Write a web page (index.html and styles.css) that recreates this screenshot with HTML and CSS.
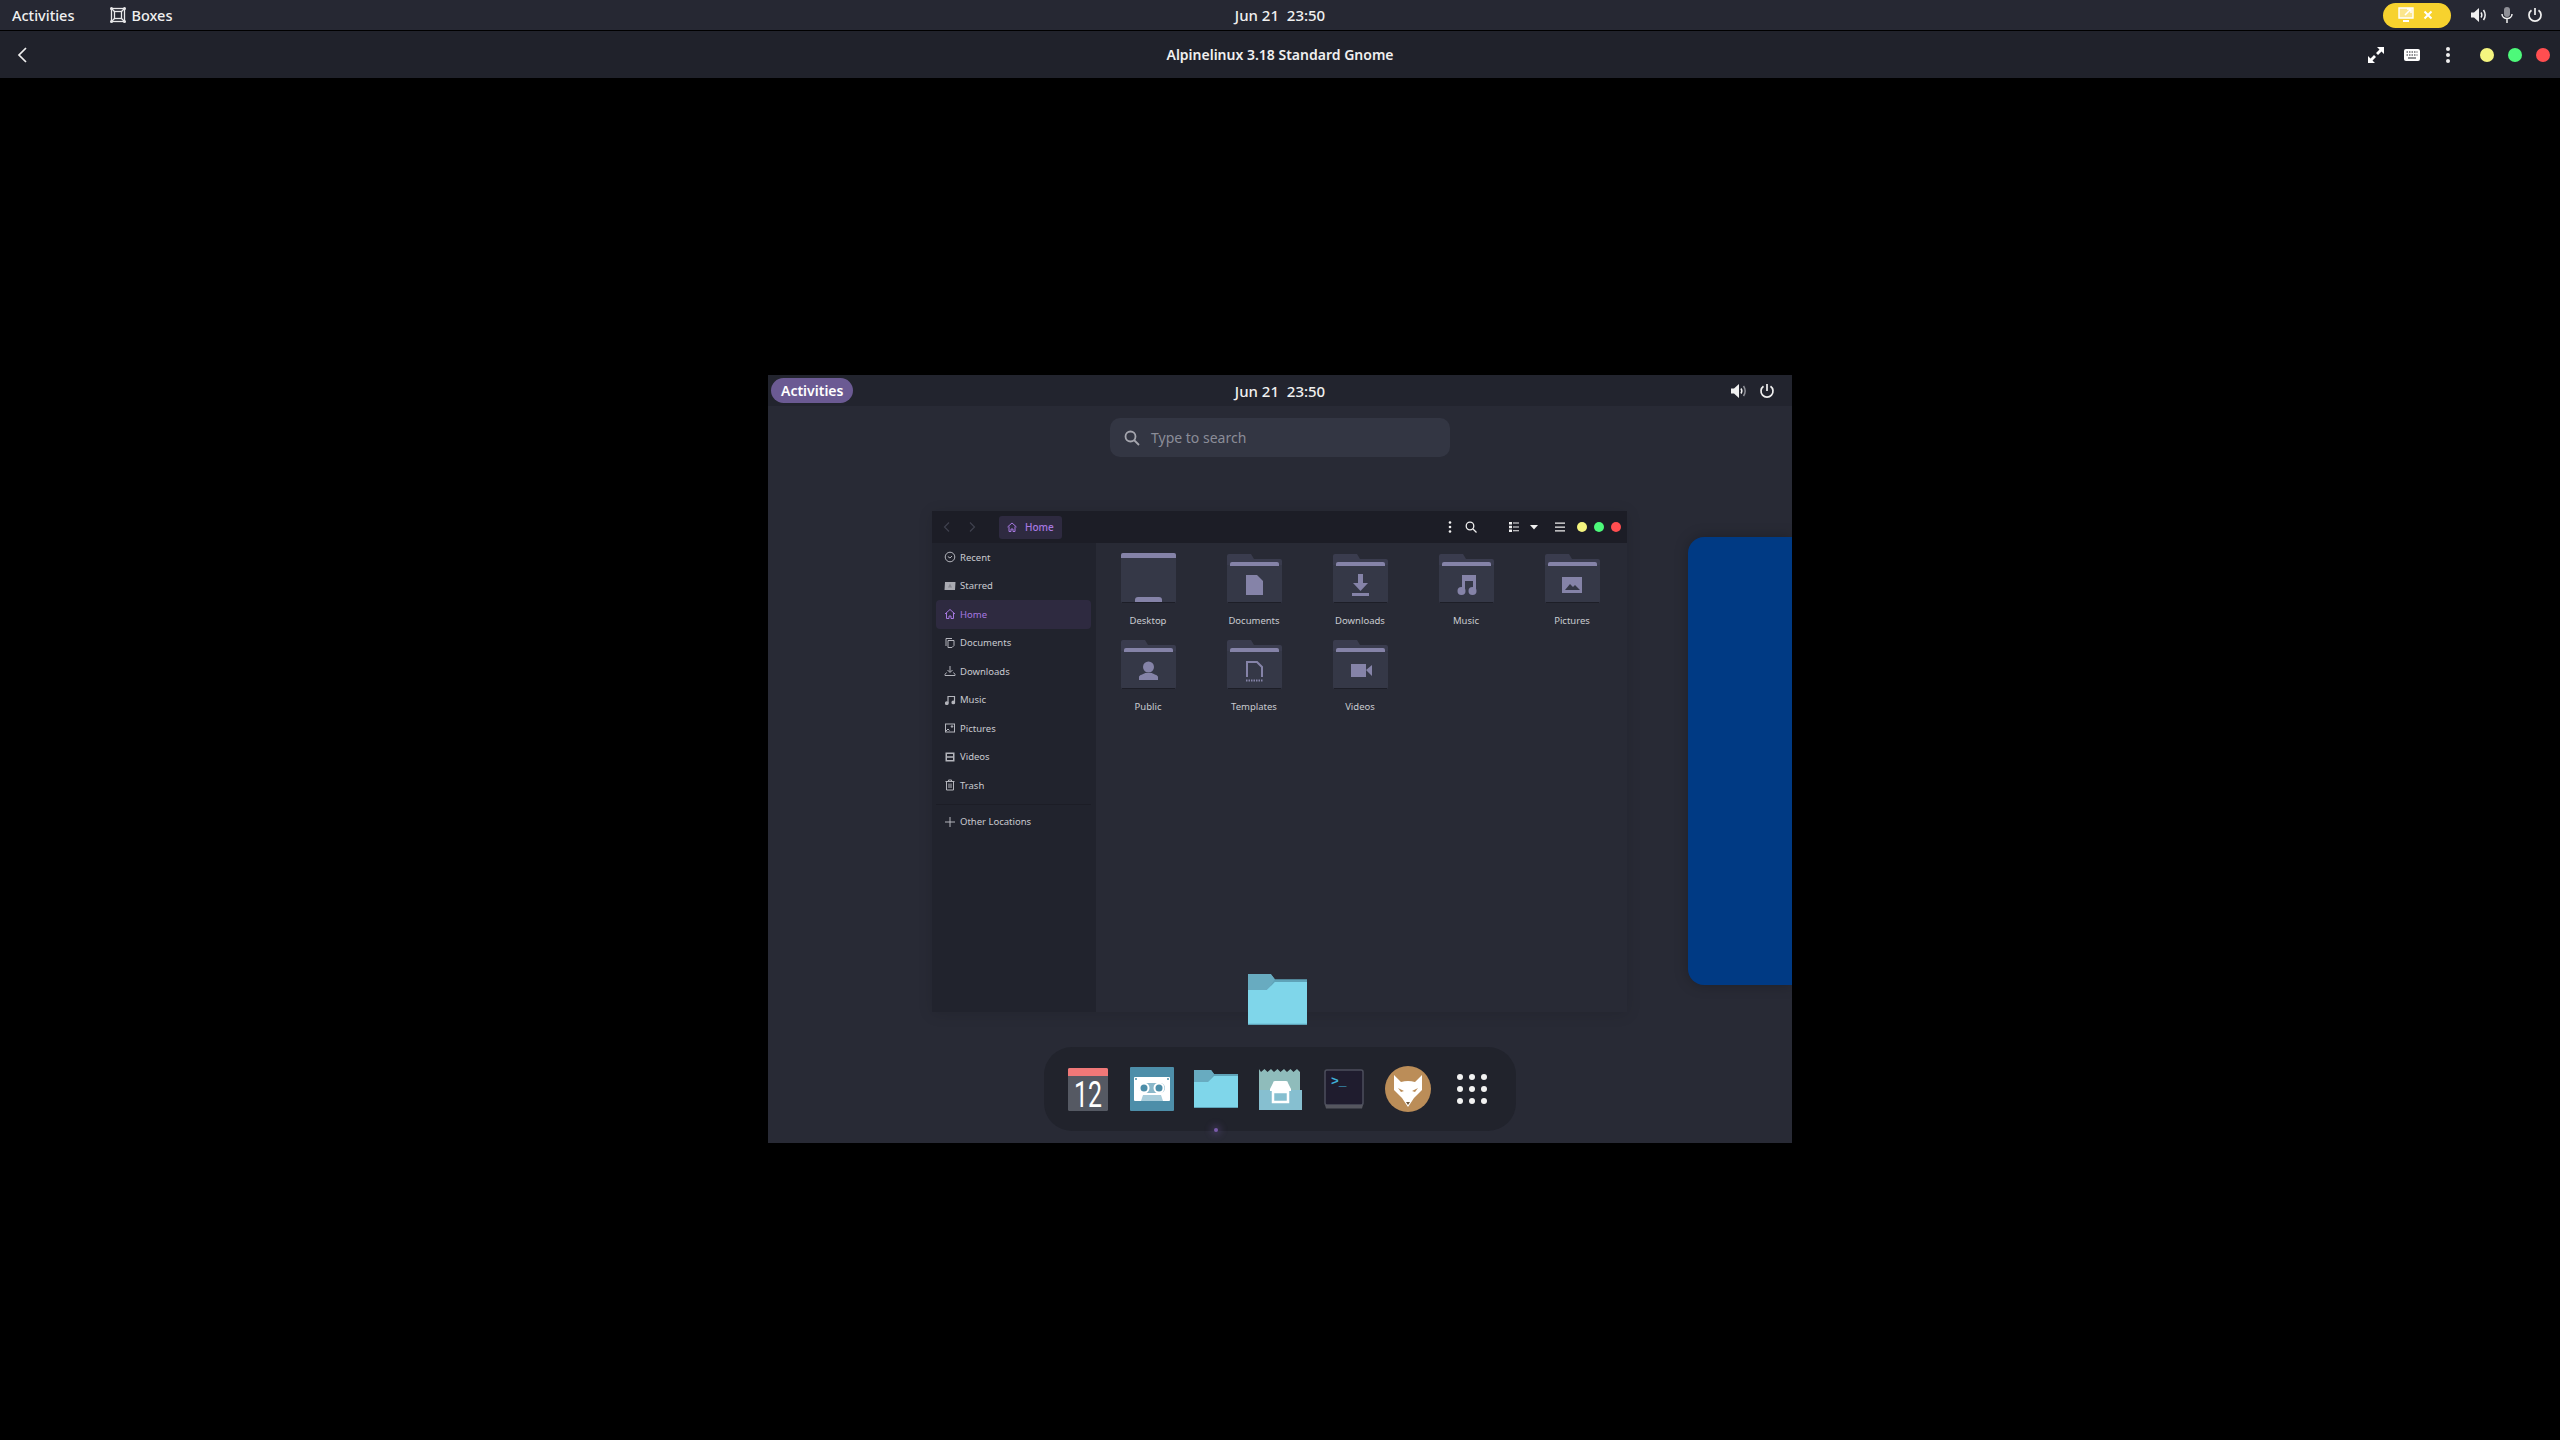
FILE: index.html
```html
<!DOCTYPE html>
<html lang="en">
<head>
    <meta charset="UTF-8" />
    <title>Alpinelinux 3.18 Standard Gnome | Boxes</title>
    <link rel="stylesheet" href="styles.css">
</head>
<body>

<svg class="defs" width="0" height="0">
    <defs>
        <symbol id="folder-dark" viewBox="0 0 55 50">
            <path d="M2 1h22l3 5h26a2 2 0 0 1 2 2v8H0V3a2 2 0 0 1 2-2z" fill="#3a3c4e"/>
            <path d="M0 12h55v36a2 2 0 0 1-2 2H2a2 2 0 0 1-2-2z" fill="#353847"/>
            <path d="M3 11a2 2 0 0 1 2-2h45a2 2 0 0 1 2 2v2H3z" fill="#8583a8"/>
            <rect x="1" y="49" width="53" height="1" fill="#1d1e27"/>
        </symbol>
        <symbol id="folder-blue" viewBox="0 0 44 38">
            <path d="M0 0h17l3 4h24v34H0z" fill="#5fa3b8"/>
            <path d="M0 0h17l3 4-6 9H0z" fill="#68abc0"/>
            <path d="M0 12h14l6-6h24v31H0z" fill="#7fd6ea"/>
        </symbol>
    </defs>
</svg>

<!-- barra de arriba -->
<header class="topbar">
    <div class="topbar-left">
        <span>Activities</span>
        <span class="app-menu">
            <svg class="ico16" viewBox="0 0 16 16" fill="none" stroke="#e8e8ea" stroke-width="1.3">
                <rect x="1.5" y="1.5" width="13" height="13"/>
                <rect x="4.5" y="4.5" width="7" height="7"/>
                <path d="M1.5 1.5l3 3M14.5 1.5l-3 3M1.5 14.5l3-3M14.5 14.5l-3-3"/>
                <g fill="#e8e8ea" stroke="none">
                    <circle cx="1.5" cy="1.5" r="1.5"/><circle cx="14.5" cy="1.5" r="1.5"/>
                    <circle cx="1.5" cy="14.5" r="1.5"/><circle cx="14.5" cy="14.5" r="1.5"/>
                </g>
            </svg>
            Boxes
        </span>
    </div>
    <div class="clock">Jun 21&nbsp; 23:50</div>
    <div class="topbar-right">
        <span class="share-pill">
            <svg class="ico16" viewBox="0 0 16 16">
                <path d="M1 1h14v10H1z" fill="#fbe68c" stroke="#fff" stroke-width="1.4"/>
                <path d="M5 14h6" stroke="#fff" stroke-width="2"/>
                <path d="M7 8l6-6M9 2h4v4" fill="none" stroke="#fff" stroke-width="1.5"/>
            </svg>
            <svg class="ico10" viewBox="0 0 10 10"><path d="M1.5 1.5l7 7M8.5 1.5l-7 7" stroke="#fff" stroke-width="2"/></svg>
        </span>
        <svg class="ico16" viewBox="0 0 16 16" fill="none" stroke="#f0f0f0">
            <path d="M0 5.5h3L8 1v14l-5-4.500H0z" fill="#f0f0f0" stroke="none"/>
            <path d="M10 5.500c1 1.500 1 3.500 0 5M12.500 3c2 3 2 7 0 10" stroke-width="1.500"/>
        </svg>
        <svg class="ico16" viewBox="0 0 16 16" fill="none" stroke="#f0f0f0" stroke-width="1.500">
            <rect x="5" y="0" width="6" height="10" rx="3" fill="#8f9097" stroke="none"/>
            <path d="M3 7c0 6 10 6 10 0M8 12v4"/>
        </svg>
        <svg class="ico16" viewBox="0 0 16 16" fill="none" stroke="#f0f0f0" stroke-width="1.700">
            <path d="M8 1v7M4.500 3.200a6 6 0 1 0 7 0"/>
        </svg>
    </div>
</header>

<div class="headerbar">
    <div>
        <svg class="ico16 back" viewBox="0 0 16 16" fill="none" stroke="#f0f0f0" stroke-width="1.700"><path d="M11 1L4 8l7 7"/></svg>
    </div>
    <div class="title">Alpinelinux 3.18 Standard Gnome</div>
    <div class="headerbar-right">
        <svg class="ico16" viewBox="0 0 16 16" fill="#fff">
            <path d="M9 0h7v7l-2.500-2.500L10 8 8 6l3.500-3.500zM7 16H0V9l2.500 2.500L6 8l2 2-3.500 3.500z"/>
        </svg>
        <svg class="ico16" viewBox="0 0 16 16">
            <rect y="2" width="16" height="12" rx="2" fill="#fff"/>
            <path d="M2.500 5h11M2.500 8h11" stroke="#20222b" stroke-dasharray="1.500 1"/>
            <path d="M4 11h8" stroke="#20222b"/>
        </svg>
        <svg class="ico16" viewBox="0 0 16 16" fill="#f0f0f0">
            <circle cx="8" cy="2" r="2"/><circle cx="8" cy="8" r="2"/><circle cx="8" cy="14" r="2"/>
        </svg>
        <div class="win-dots">
            <span class="dot yellow"></span>
            <span class="dot green"></span>
            <span class="dot red"></span>
        </div>
    </div>
</div>

<main class="viewer">
    <!-- pantalla de la maquina virtual -->
    <div class="vm">
        <div class="vm-panel">
            <div><span class="activities-pill">Activities</span></div>
            <div class="clock">Jun 21&nbsp; 23:50</div>
            <div class="vm-panel-right">
                <svg class="ico16" viewBox="0 0 16 16" fill="none" stroke="#8f9097">
                    <path d="M0 5.500h3L8 1v14l-5-4.500H0z" fill="#f0f0f0" stroke="none"/>
                    <path d="M10 5.500c1 1.500 1 3.500 0 5" stroke="#f0f0f0" stroke-width="1.500"/>
                    <path d="M12.500 3c2 3 2 7 0 10" stroke-width="1.500"/>
                </svg>
                <svg class="ico16" viewBox="0 0 16 16" fill="none" stroke="#f0f0f0" stroke-width="1.700">
                    <path d="M8 1v7M4.500 3.200a6 6 0 1 0 7 0"/>
                </svg>
            </div>
        </div>

        <div class="search">
            <svg class="ico16" viewBox="0 0 16 16" fill="none" stroke="#a5a6ae" stroke-width="1.800">
                <circle cx="6.500" cy="6.500" r="5"/><path d="M10 10l5 5"/>
            </svg>
            <span>Type to search</span>
        </div>

        <!-- ventana de archivos -->
        <div class="files-window">
            <div class="files-header">
                <svg class="ico10 nav-arrow" viewBox="0 0 10 10" fill="none" stroke="#3f414e" stroke-width="1.200"><path d="M7 .5L2.500 5 7 9.500"/></svg>
                <svg class="ico10 nav-arrow" viewBox="0 0 10 10" fill="none" stroke="#3f414e" stroke-width="1.200"><path d="M3 .5L7.500 5 3 9.500"/></svg>
                <div class="path-btn">
                    <svg class="ico10" viewBox="0 0 10 10" fill="none" stroke="#a678e0"><path d="M.5 5L5 1l4.500 4M2 4.500V9.500h2V7h2v2.500h2v-5"/></svg>
                    <span>Home</span>
                </div>
                <div class="files-tools">
                    <svg class="ico12" viewBox="0 0 12 12" fill="#f0f0f0"><circle cx="6" cy="1.500" r="1.300"/><circle cx="6" cy="6" r="1.300"/><circle cx="6" cy="10.500" r="1.300"/></svg>
                    <svg class="ico12 tool-search" viewBox="0 0 12 12" fill="none" stroke="#f0f0f0" stroke-width="1.300"><circle cx="5" cy="5" r="3.800"/><path d="M8 8l3.500 3.500"/></svg>
                    <svg class="ico12 tool-view" viewBox="0 0 12 12" fill="#f0f0f0"><path d="M1 1h3v2.500H1zM1 4.800h3v2.500H1zM1 8.500h3V11H1zM5 1.500h6v1H5zM5 5.500h6v1H5zM5 9.300h6v1H5z"/></svg>
                    <svg class="ico10" viewBox="0 0 10 10" fill="#f0f0f0"><path d="M1 3h8L5 7.500z"/></svg>
                    <svg class="ico12 tool-menu" viewBox="0 0 12 12" fill="#f0f0f0"><path d="M1 1.500h10v1.300H1zM1 5.400h10v1.300H1zM1 9.300h10v1.300H1z"/></svg>
                    <span class="dot small yellow first"></span>
                    <span class="dot small green"></span>
                    <span class="dot small red"></span>
                </div>
            </div>

            <div class="files-body">
                <aside class="sidebar">
                    <div class="side-row">
                        <svg class="ico12" viewBox="0 0 12 12" fill="none" stroke="#b4b5bc"><circle cx="6" cy="6" r="4.800"/><path d="M3.800 5.500L6 7l2-2"/></svg>
                        <span>Recent</span>
                    </div>
                    <div class="side-row">
                        <svg class="ico12" viewBox="0 0 12 12"><path d="M1 2h10.500l-.5 8H.5z" fill="#a9aab1"/><path d="M6 3.500l2 4H4z" fill="#85868e"/></svg>
                        <span>Starred</span>
                    </div>
                    <div class="side-row active">
                        <svg class="ico12" viewBox="0 0 12 12" fill="none" stroke="#a678e0"><path d="M1 6l5-4.500L11 6M2.500 5v5.500h2.500V8h2v2.500h2.500V5"/></svg>
                        <span>Home</span>
                    </div>
                    <div class="side-row">
                        <svg class="ico12" viewBox="0 0 12 12" fill="none" stroke="#b4b5bc"><path d="M2 9V1.500h6M4 3.500h6v5l-2 2H4z"/></svg>
                        <span>Documents</span>
                    </div>
                    <div class="side-row">
                        <svg class="ico12" viewBox="0 0 12 12" fill="none" stroke="#b4b5bc"><path d="M6 1v6M3.500 5L6 7.500 8.500 5M2.500 7.500L1 9.500v1h10v-1L9.500 7.500"/></svg>
                        <span>Downloads</span>
                    </div>
                    <div class="side-row">
                        <svg class="ico12" viewBox="0 0 12 12" fill="none" stroke="#b4b5bc" stroke-width="1.200"><path d="M4 9V2.500h6.500V8"/><circle cx="2.800" cy="9.200" r="1.300" fill="#b4b5bc"/><circle cx="9.300" cy="8.400" r="1.300" fill="#b4b5bc"/></svg>
                        <span>Music</span>
                    </div>
                    <div class="side-row">
                        <svg class="ico12" viewBox="0 0 12 12" fill="none" stroke="#b4b5bc"><rect x="1.500" y="2" width="9" height="8"/><path d="M2 9l2-2 1.500 1.500" /><circle cx="8" cy="4.500" r=".8" fill="#b4b5bc"/></svg>
                        <span>Pictures</span>
                    </div>
                    <div class="side-row">
                        <svg class="ico12" viewBox="0 0 12 12" fill="#b4b5bc"><path d="M1.500 1.500h9v9h-9zM3 3v2.200h6V3zM3 6.800V9h6V6.800z" fill-rule="evenodd"/></svg>
                        <span>Videos</span>
                    </div>
                    <div class="side-row">
                        <svg class="ico12" viewBox="0 0 12 12" fill="none" stroke="#b4b5bc"><path d="M1.500 2.500h9M4.500 2.500V1h3v1.500M2.500 2.500v8.500h7V2.500M5 4.500V9M7 4.500V9"/></svg>
                        <span>Trash</span>
                    </div>
                    <div class="side-sep"></div>
                    <div class="side-row">
                        <svg class="ico12" viewBox="0 0 12 12" fill="none" stroke="#b4b5bc"><path d="M6 1v10M1 6h10"/></svg>
                        <span>Other Locations</span>
                    </div>
                </aside>

                <section class="file-grid">
                    <div class="file-item">
                        <svg class="folder" viewBox="0 0 55 50">
                            <path d="M2 0h51a2 2 0 0 1 2 2v46a2 2 0 0 1-2 2H2a2 2 0 0 1-2-2V2a2 2 0 0 1 2-2z" fill="#353847"/>
                            <path d="M2 0h51a2 2 0 0 1 2 2v3H0V2a2 2 0 0 1 2-2z" fill="#8583a8"/>
                            <path d="M14 49v-2a3 3 0 0 1 3-3h21a3 3 0 0 1 3 3v2z" fill="#8583a8"/>
                            <rect x="1" y="49" width="53" height="1" fill="#1d1e27"/>
                        </svg>
                        <span>Desktop</span>
                    </div>
                    <div class="file-item">
                        <svg class="folder" viewBox="0 0 55 50">
                            <use href="#folder-dark"/>
                            <path d="M19 22h11l6 6v14H19z" fill="#8583a8"/>
                        </svg>
                        <span>Documents</span>
                    </div>
                    <div class="file-item">
                        <svg class="folder" viewBox="0 0 55 50">
                            <use href="#folder-dark"/>
                            <path d="M25 21h5v9h5l-7.500 8L20 30h5zM19 40h17v3H19z" fill="#8583a8"/>
                        </svg>
                        <span>Downloads</span>
                    </div>
                    <div class="file-item">
                        <svg class="folder" viewBox="0 0 55 50">
                            <use href="#folder-dark"/>
                            <path d="M23 37V22h14v17h-3V28h-8v9z" fill="#8583a8"/>
                            <circle cx="22.500" cy="38" r="4" fill="#8583a8"/>
                            <circle cx="33.500" cy="38" r="4" fill="#8583a8"/>
                        </svg>
                        <span>Music</span>
                    </div>
                    <div class="file-item">
                        <svg class="folder" viewBox="0 0 55 50">
                            <use href="#folder-dark"/>
                            <path d="M17 24h20v16H17z" fill="#8583a8"/>
                            <path d="M20 37l5-6 3 3 2-2 5 5z" fill="#353847"/>
                        </svg>
                        <span>Pictures</span>
                    </div>
                    <div class="file-item">
                        <svg class="folder" viewBox="0 0 55 50">
                            <use href="#folder-dark"/>
                            <circle cx="27.500" cy="28" r="5.500" fill="#8583a8"/>
                            <path d="M18 41v-3c0-2 5-3 6-4h7c1 1 6 2 6 4v3z" fill="#8583a8"/>
                        </svg>
                        <span>Public</span>
                    </div>
                    <div class="file-item">
                        <svg class="folder" viewBox="0 0 55 50">
                            <use href="#folder-dark"/>
                            <path d="M20 38V23h10l5 5v10" fill="none" stroke="#8583a8" stroke-width="2"/>
                            <path d="M19 41.500h17" stroke="#8583a8" stroke-width="2" stroke-dasharray="1.500 1"/>
                        </svg>
                        <span>Templates</span>
                    </div>
                    <div class="file-item">
                        <svg class="folder" viewBox="0 0 55 50">
                            <use href="#folder-dark"/>
                            <path d="M18 25h15v13H18zM33 31l6-5v11z" fill="#8583a8"/>
                        </svg>
                        <span>Videos</span>
                    </div>
                </section>
            </div>
        </div>

        <div class="other-window"></div>

        <svg class="drag-folder" viewBox="0 0 44 38" preserveAspectRatio="none"><use href="#folder-blue"/></svg>

        <!-- dock -->
        <nav class="dock">
            <div class="dock-slot">
                <svg class="app-cal" viewBox="0 0 40 43">
                    <rect width="40" height="43" rx="1.500" fill="#555963"/>
                    <path d="M1.500 0h37A1.500 1.500 0 0 1 40 1.500V8H0V1.500A1.500 1.500 0 0 1 1.500 0z" fill="#f07878"/>
                    <text x="6" y="39" class="cal-day" textLength="28" lengthAdjust="spacingAndGlyphs">12</text>
                </svg>
            </div>
            <div class="dock-slot">
                <svg class="app-44" viewBox="0 0 44 44">
                    <rect width="44" height="44" rx="1" fill="#4d8ea9"/>
                    <rect x="4" y="10" width="36" height="24" rx="1" fill="#fff"/>
                    <rect x="9" y="16" width="26" height="10" rx="5" fill="#8ab8ca"/>
                    <circle cx="14" cy="21" r="5.500" fill="#fff"/>
                    <circle cx="29" cy="21" r="5.500" fill="#fff"/>
                    <circle cx="14" cy="21" r="3.500" fill="#4d8ea9"/>
                    <circle cx="29" cy="21" r="3.500" fill="#4d8ea9"/>
                    <path d="M11 34l2-6h18l2 6z" fill="#a8cddb"/>
                    <circle cx="6" cy="12" r="1" fill="#4d8ea9"/>
                    <circle cx="38" cy="12" r="1" fill="#4d8ea9"/>
                </svg>
            </div>
            <div class="dock-slot">
                <svg class="app-folder" viewBox="0 0 44 38" preserveAspectRatio="none"><use href="#folder-blue"/></svg>
            </div>
            <div class="dock-slot">
                <svg class="app-store" viewBox="0 0 43 42">
                    <path d="M0 1l2 3 3.500-3 3 3 3.500-3 3 3 3.500-3 3 3 3.500-3 3 3 3.500-3 3 3 3.500-3 3 3V22H0z" fill="#8fbcbb"/>
                    <rect y="22" width="43" height="20" fill="#86bfd0"/>
                    <path d="M14 15a2 2 0 0 1 2-2h11a2 2 0 0 1 2 2l3 6v2H11v-2z" fill="#fff"/>
                    <path d="M14 24h15v10H14z" fill="none" stroke="#fff" stroke-width="2.500"/>
                </svg>
            </div>
            <div class="dock-slot">
                <svg class="app-term" viewBox="0 0 40 40">
                    <rect x="1" y="1" width="38" height="35" rx="2" fill="#1f1c2e" stroke="#4c4e5c" stroke-width="1.500"/>
                    <path d="M1 36h38l-1 3.500H2z" fill="#55565f"/>
                    <text x="7" y="16" class="term-prompt">&gt;_</text>
                </svg>
            </div>
            <div class="dock-slot">
                <svg class="app-fox" viewBox="0 0 46 46">
                    <circle cx="23" cy="23" r="23" fill="#bb8d58"/>
                    <path d="M9 9l7 7q7-2 14 0l7-7v15l-8 8-6 9-6-9-8-8z" fill="#fff"/>
                    <path d="M13 22l6 3-3 1zM33 22l-6 3 3 1z" fill="#bb8d58"/>
                    <path d="M21 36h4l-2 3z" fill="#6b5338"/>
                </svg>
            </div>
            <div class="dock-slot">
                <svg class="app-grid" viewBox="0 0 30 30" fill="#f2f2f2">
                    <circle cx="3" cy="3" r="3"/><circle cx="15" cy="3" r="3"/><circle cx="27" cy="3" r="3"/>
                    <circle cx="3" cy="15" r="3"/><circle cx="15" cy="15" r="3"/><circle cx="27" cy="15" r="3"/>
                    <circle cx="3" cy="27" r="3"/><circle cx="15" cy="27" r="3"/><circle cx="27" cy="27" r="3"/>
                </svg>
            </div>
            <span class="running-dot"></span>
        </nav>
    </div>
</main>

</body>
</html>
```

FILE: styles.css
```css
html, body {
    margin: 0;
    height: 100%;
    overflow: hidden;
    background-color: #000;
}

body {
    display: flex;
    flex-direction: column;
    font-family: "Noto Sans", sans-serif;
    color: #f0f0f0;
}

svg {
    display: block;
    flex: none;
}

.defs {
    position: absolute;
}

.ico16 {
    width: 16px;
    height: 16px;
}

.ico12 {
    width: 12px;
    height: 12px;
}

.ico10 {
    width: 10px;
    height: 10px;
}

/* barra de arriba */
.topbar {
    display: grid;
    grid-template-columns: 1fr auto 1fr;
    align-items: center;
    height: 30px;
    border-bottom: 1px solid #000;
    background-color: #262833;
    font-size: 15px;
    font-weight: 500;
}

.topbar-left {
    display: flex;
    align-items: center;
    gap: 36px;
    padding-left: 12px;
    font-size: 14.5px;
}

.app-menu {
    display: flex;
    align-items: center;
    gap: 5px;
}

.topbar-right {
    display: flex;
    justify-content: flex-end;
    align-items: center;
    gap: 12px;
    padding-right: 17px;
}

.share-pill {
    display: flex;
    align-items: center;
    gap: 9px;
    height: 25px;
    width: 68px;
    box-sizing: border-box;
    margin-right: 8px;
    padding-left: 15px;
    border-radius: 13px;
    background-color: #f7d22e;
}

.headerbar {
    display: grid;
    grid-template-columns: 1fr auto 1fr;
    align-items: center;
    height: 47px;
    background-color: #20222b;
}

.back {
    margin-left: 15px;
}

.title {
    font-size: 14px;
    font-weight: 600;
}

.headerbar-right {
    display: flex;
    justify-content: flex-end;
    align-items: center;
    gap: 20px;
    padding-right: 10px;
}

.win-dots {
    display: flex;
    gap: 14px;
    margin-left: 4px;
}

.dot {
    display: block;
    width: 14px;
    height: 14px;
    border-radius: 50%;
}

.dot.small {
    width: 10px;
    height: 10px;
}

.yellow {
    background-color: #f5f57f;
}

.green {
    background-color: #4df97a;
}

.red {
    background-color: #ff4e50;
}

/* pantalla */
.viewer {
    flex: 1;
    display: flex;
    justify-content: center;
    align-items: center;
}

.vm {
    position: relative;
    display: flex;
    flex-direction: column;
    width: 1024px;
    height: 768px;
    overflow: hidden;
    background-color: #282a35;
}

.vm-panel {
    display: grid;
    grid-template-columns: 1fr auto 1fr;
    align-items: center;
    height: 31px;
    background-color: #22242e;
    font-size: 15px;
    font-weight: 500;
}

.activities-pill {
    display: inline-block;
    margin-left: 3px;
    padding: 0 10px;
    line-height: 25px;
    border-radius: 13px;
    background-color: #6b5a93;
    color: #fff;
    font-size: 14px;
    font-weight: 600;
}

.vm-panel-right {
    display: flex;
    justify-content: flex-end;
    gap: 12px;
    padding-right: 17px;
}

.search {
    display: flex;
    align-items: center;
    gap: 11px;
    box-sizing: border-box;
    width: 340px;
    height: 39px;
    margin: 12px auto 0;
    padding-left: 14px;
    border-radius: 10px;
    background-color: #333643;
    color: #8b8d98;
    font-size: 14px;
}

.files-window {
    position: absolute;
    left: 164px;
    top: 136px;
    display: flex;
    flex-direction: column;
    width: 695px;
    height: 501px;
    background-color: #282a35;
    box-shadow: 0 2px 14px rgba(0, 0, 0, 0.12);
}

.files-header {
    display: flex;
    align-items: center;
    height: 32px;
    padding: 0 6px 0 10px;
    background-color: #1c1d26;
}

.nav-arrow + .nav-arrow {
    margin-left: 15px;
}

.path-btn {
    display: flex;
    align-items: center;
    gap: 8px;
    box-sizing: border-box;
    width: 63px;
    height: 23px;
    margin-left: 22px;
    padding-left: 8px;
    border-radius: 3px;
    background-color: #2e2a40;
    color: #a678e0;
    font-size: 10px;
    font-weight: 500;
}

.files-tools {
    display: flex;
    align-items: center;
    gap: 9px;
    margin-left: auto;
}

.tool-search {
    margin-right: 1px;
}

.tool-view {
    margin-left: 21px;
}

.tool-menu {
    margin-left: 6px;
}

.files-tools .dot {
    margin-left: -2px;
}

.files-tools .dot.first {
    margin-left: 2px;
}

.files-body {
    flex: 1;
    display: flex;
}

.sidebar {
    width: 164px;
    box-sizing: border-box;
    padding: 0 5px 0 4px;
    background-color: #21232d;
    font-size: 9.5px;
    color: #c9cad0;
}

.side-row {
    display: flex;
    align-items: center;
    gap: 4px;
    height: 28.5px;
    padding-left: 8px;
    border-radius: 4px;
}

.side-row.active {
    background-color: #2e2a40;
    color: #a678e0;
}

.side-sep {
    height: 1px;
    margin: 4px 0 3px;
    background-color: #1c1d26;
}

.file-grid {
    flex: 1;
    display: grid;
    grid-template-columns: repeat(auto-fill, 106px);
    grid-auto-rows: 86px;
    margin-left: -1px;
    padding-top: 10px;
    font-size: 9.5px;
    color: #c9cad0;
}

.file-item {
    display: flex;
    flex-direction: column;
    align-items: center;
    gap: 11px;
    line-height: 14px;
}

.folder {
    width: 55px;
    height: 50px;
}

.other-window {
    position: absolute;
    right: 0;
    top: 162px;
    width: 104px;
    height: 448px;
    border-radius: 16px 0 0 16px;
    background-color: #003a84;
    box-shadow: 0 0 14px rgba(0, 0, 0, 0.25);
}

.drag-folder {
    position: absolute;
    left: 480px;
    top: 599px;
    width: 59px;
    height: 51px;
}

/* dock */
.dock {
    position: relative;
    display: flex;
    align-self: center;
    align-items: center;
    height: 84px;
    margin-top: auto;
    margin-bottom: 12px;
    padding: 0 12px;
    border-radius: 28px;
    background-color: #21232c;
}

.dock-slot {
    display: flex;
    justify-content: center;
    width: 64px;
}

.app-cal {
    width: 40px;
    height: 43px;
    overflow: visible;
}

.cal-day {
    font-family: Roboto, sans-serif;
    font-size: 36px;
    font-weight: 400;
    fill: #fff;
}

.app-44 {
    width: 44px;
    height: 44px;
}

.app-folder {
    width: 44px;
    height: 38px;
}

.app-store {
    width: 43px;
    height: 42px;
}

.app-term {
    width: 40px;
    height: 40px;
}

.term-prompt {
    font-family: "Liberation Mono", monospace;
    font-size: 13px;
    font-weight: 700;
    fill: #3fb0d8;
}

.app-fox {
    width: 46px;
    height: 46px;
}

.app-grid {
    width: 30px;
    height: 30px;
}

.running-dot {
    position: absolute;
    left: 170px;
    bottom: -1px;
    width: 4px;
    height: 4px;
    border-radius: 50%;
    background-color: #7a5cab;
    box-shadow: 0 0 7px 3px rgba(122, 92, 171, 0.3);
}
```
